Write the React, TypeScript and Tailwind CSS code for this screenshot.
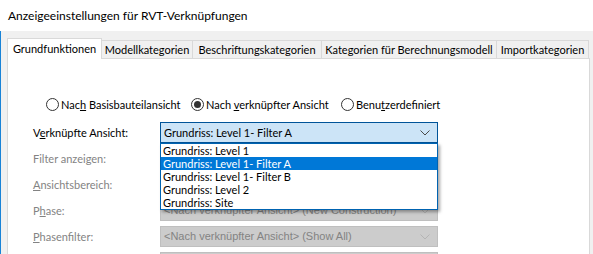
import React from "react";

const font = { fontFamily: 'Lato, "Segoe UI", sans-serif' };

const Chevron = ({ disabled }: { disabled?: boolean }) => (
  <svg width="10" height="6" viewBox="0 0 10 6" className="shrink-0">
    <path
      d="M0.5 0.5 L5 5 L9.5 0.5"
      fill="none"
      stroke={disabled ? "#b4b4b4" : "#4a4a4a"}
      strokeWidth="1"
    />
  </svg>
);

const Radio = ({ checked, label, width }: { checked?: boolean; label: React.ReactNode; width: string }) => (
  <div className={`flex items-center gap-[2px] ${width}`}>
    <span className="w-[13px] h-[13px] rounded-full border border-[#333] bg-white flex items-center justify-center shrink-0">
      {checked && <span className="w-[7px] h-[7px] rounded-full bg-[#333]" />}
    </span>
    <span>{label}</span>
  </div>
);

const tabs = [
  { label: "Modellkategorien", w: "w-[91px]" },
  { label: "Beschriftungskategorien", w: "w-[129px]" },
  { label: "Kategorien für Berechnungsmodell", w: "w-[175px]" },
  { label: "Importkategorien", w: "w-[92px]" },
];

const items = [
  "Grundriss: Level 1",
  "Grundriss: Level 1- Filter A",
  "Grundriss: Level 1- Filter B",
  "Grundriss: Level 2",
  "Grundriss: Site",
];

const DisabledCombo = ({ text }: { text?: string }) => (
  <div className="w-[278px] h-[21px] bg-[#cccccc] border border-[#bfbfbf] flex items-center justify-between pl-[3px] pr-[7px] text-[#838383]">
    <span className="font-['Liberation_Sans'] text-[11px]">{text}</span>
    <Chevron disabled />
  </div>
);

const Row = ({ label, children }: { label: React.ReactNode; children: React.ReactNode }) => (
  <div className="flex items-center h-[21px]">
    <div className="w-[127px] text-[#838383]">{label}</div>
    {children}
  </div>
);

export default function App() {
  return (
    <div
      className="w-[593px] h-[254px] overflow-hidden bg-white text-[11px] text-black leading-none whitespace-nowrap"
      style={font}
    >
      <div className="h-[31px] flex items-center pl-[8px] text-[12px]">
        Anzeigeeinstellungen für RVT-Verknüpfungen
      </div>
      <div className="h-[223px] bg-[#f0f0f0] border-l border-[#1883d7] pl-[6px] flex flex-col">
        {/* tab strip */}
        <div className="flex items-end h-[27px] shrink-0">
          <div className="w-[95px] h-[21px] bg-white border border-b-0 border-[#d9d9d9] flex items-center justify-center relative z-10 -mb-px pb-px">
            Grundfunktionen
          </div>
          {tabs.map((t) => (
            <div
              key={t.label}
              className={`${t.w} h-[18px] border-t border-r border-[#d9d9d9] flex items-center justify-center`}
            >
              {t.label}
            </div>
          ))}
        </div>
        {/* panel */}
        <div className="w-[583px] flex-1 bg-white border border-[#d9d9d9] relative">
          <div className="flex items-center pl-[38px] mt-[38px] h-[14px]">
            <Radio width="w-[145px]" label={<>Nac<u>h</u> Basisbauteilansicht</>} />
            <Radio width="w-[150px]" checked label={<>Nach <u>v</u>erknüpfter Ansicht</>} />
            <Radio width="w-[110px]" label={<>Benu<u>t</u>zerdefiniert</>} />
          </div>
          <div className="flex flex-col gap-[5px] pl-[25px] mt-[11px]">
            <div className="flex items-center h-[21px]">
              <div className="w-[127px]">V<u>e</u>rknüpfte Ansicht:</div>
              <div className="relative">
                <div className="w-[278px] h-[21px] bg-[#cce4f7] border border-[#005499] flex items-center justify-between pl-[3px] pr-[7px]">
                  <span>Grundriss: Level 1- Filter A</span>
                  <Chevron />
                </div>
                <div className="absolute left-0 top-[21px] w-[278px] bg-white border border-[#0063b1] z-20 shadow-[2px_2px_3px_rgba(0,0,0,0.35)]">
                  {items.map((it, i) => (
                    <div
                      key={it}
                      className={`h-[13px] flex items-center pl-[2px] ${i === 1 ? "bg-[#0078d7] text-white" : ""}`}
                    >
                      {it}
                    </div>
                  ))}
                </div>
              </div>
            </div>
            <Row label="Filter anzeigen:">
              <DisabledCombo />
            </Row>
            <Row label={<><u>A</u>nsichtsbereich:</>}>
              <DisabledCombo />
            </Row>
            <Row label={<>P<u>h</u>ase:</>}>
              <DisabledCombo text="<Nach verknüpfter Ansicht> (New Construction)" />
            </Row>
            <Row label={<><u>P</u>hasenfilter:</>}>
              <DisabledCombo text="<Nach verknüpfter Ansicht> (Show All)" />
            </Row>
            <Row label="">
              <DisabledCombo />
            </Row>
          </div>
        </div>
      </div>
    </div>
  );
}
